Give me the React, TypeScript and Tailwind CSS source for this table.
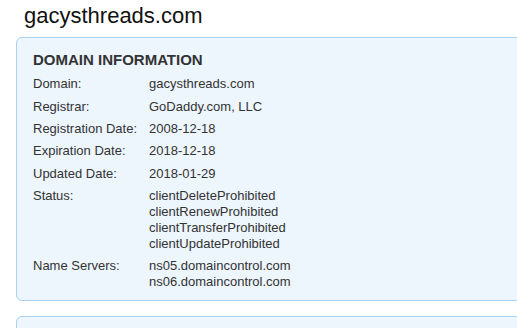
import React from "react";

const rows: [string, string[]][] = [
  ["Domain:", ["gacysthreads.com"]],
  ["Registrar:", ["GoDaddy.com, LLC"]],
  ["Registration Date:", ["2008-12-18"]],
  ["Expiration Date:", ["2018-12-18"]],
  ["Updated Date:", ["2018-01-29"]],
  [
    "Status:",
    [
      "clientDeleteProhibited",
      "clientRenewProhibited",
      "clientTransferProhibited",
      "clientUpdateProhibited",
    ],
  ],
  ["Name Servers:", ["ns05.domaincontrol.com", "ns06.domaincontrol.com"]],
];

export default function App() {
  return (
    <div
      className="w-[517px] h-[328px] overflow-hidden bg-white text-[#333]"
      style={{ fontFamily: '"Liberation Sans", Arial, sans-serif' }}
    >
      <h1 className="pl-[24px] pt-[3px] text-[22px] leading-[26px] text-[#111]">gacysthreads.com</h1>
      <div className="ml-[16px] mt-[8px] w-[560px] rounded-[6px] border border-[#a9d1f2] bg-[#edf5fd] pl-[16px] pt-[13px] pb-[6px]">
        <h2 className="text-[15px] leading-[18px] font-bold text-[#333] mb-[4px]">DOMAIN INFORMATION</h2>
        <div className="flex flex-col">
          {rows.map(([label, vals]) => (
            <div key={label} className="flex py-[3.2px] text-[13px] leading-[16px]">
              <div className="w-[116px] shrink-0">{label}</div>
              <div className="flex flex-col">
                {vals.map((v) => (
                  <span key={v}>{v}</span>
                ))}
              </div>
            </div>
          ))}
        </div>
      </div>
      <div className="ml-[16px] mt-[15px] w-[560px] h-[40px] rounded-[6px] border border-[#a9d1f2] bg-[#edf5fd]" />
    </div>
  );
}
